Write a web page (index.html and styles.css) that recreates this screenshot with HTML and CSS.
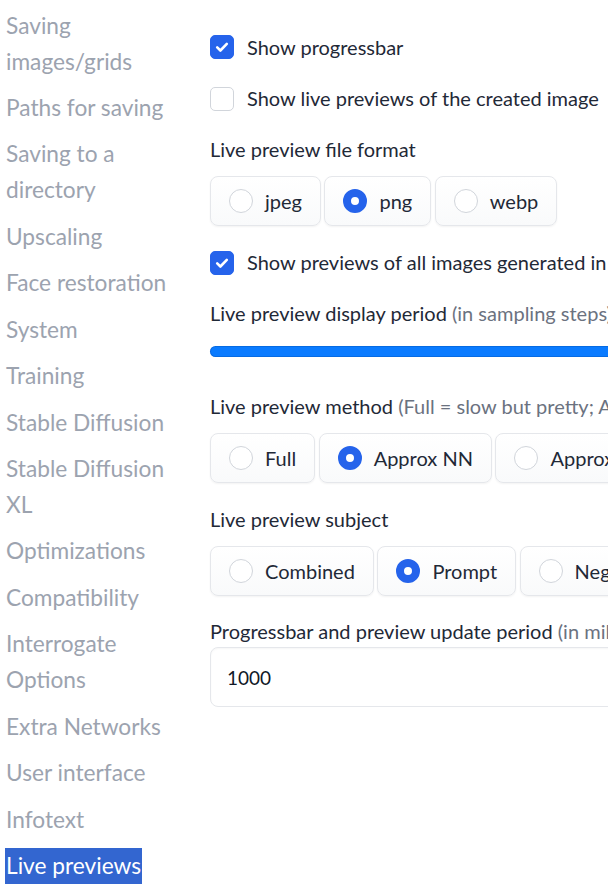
FILE: index.html
```html
<!DOCTYPE html>
<html>
<head>
<meta charset="utf-8">
<link rel="stylesheet" href="styles.css">
</head>
<body>
<div class="page">
  <nav class="sidebar">
    <div class="nav-item">Saving images/grids</div>
    <div class="nav-item">Paths for saving</div>
    <div class="nav-item">Saving to a directory</div>
    <div class="nav-item">Upscaling</div>
    <div class="nav-item">Face restoration</div>
    <div class="nav-item">System</div>
    <div class="nav-item">Training</div>
    <div class="nav-item">Stable Diffusion</div>
    <div class="nav-item">Stable Diffusion XL</div>
    <div class="nav-item">Optimizations</div>
    <div class="nav-item">Compatibility</div>
    <div class="nav-item">Interrogate Options</div>
    <div class="nav-item">Extra Networks</div>
    <div class="nav-item">User interface</div>
    <div class="nav-item">Infotext</div>
    <div class="nav-item"><span class="nav-active">Live previews</span></div>
  </nav>
  <main class="content">
    <label class="check-row">
      <span class="checkbox checked"><svg viewBox="0 0 24 24" width="24" height="24"><path d="M7.2 12.4l3.2 3.1 6.4-6.6" fill="none" stroke="#fff" stroke-width="2.6" stroke-linecap="round" stroke-linejoin="round"/></svg></span>
      <span class="text">Show progressbar</span>
    </label>
    <label class="check-row">
      <span class="checkbox"></span>
      <span class="text">Show live previews of the created image</span>
    </label>
    <div class="group">
      <div class="label">Live preview file format</div>
      <div class="radio-row">
        <div class="radio"><span class="dot"></span><span>jpeg</span></div>
        <div class="radio"><span class="dot on"></span><span>png</span></div>
        <div class="radio"><span class="dot"></span><span>webp</span></div>
      </div>
    </div>
    <label class="check-row">
      <span class="checkbox checked"><svg viewBox="0 0 24 24" width="24" height="24"><path d="M7.2 12.4l3.2 3.1 6.4-6.6" fill="none" stroke="#fff" stroke-width="2.6" stroke-linecap="round" stroke-linejoin="round"/></svg></span>
      <span class="text">Show previews of all images generated in a batch as a grid</span>
    </label>
    <div class="group slider-group">
      <div class="label">Live preview display period <span class="hint">(in sampling steps) - 0 = only show previews on completion</span></div>
      <div class="slider"></div>
    </div>
    <div class="group">
      <div class="label">Live preview method <span class="hint">(Full = slow but pretty; Approx NN and TAESD = fast but low quality; Approx cheap = super fast but terrible otherwise)</span></div>
      <div class="radio-row">
        <div class="radio"><span class="dot"></span><span>Full</span></div>
        <div class="radio"><span class="dot on"></span><span>Approx NN</span></div>
        <div class="radio"><span class="dot"></span><span>Approx cheap</span></div>
        <div class="radio"><span class="dot"></span><span>TAESD</span></div>
      </div>
    </div>
    <div class="group">
      <div class="label">Live preview subject</div>
      <div class="radio-row">
        <div class="radio"><span class="dot"></span><span>Combined</span></div>
        <div class="radio"><span class="dot on"></span><span>Prompt</span></div>
        <div class="radio"><span class="dot"></span><span>Negative prompt</span></div>
      </div>
    </div>
    <div class="group tight">
      <div class="label">Progressbar and preview update period <span class="hint">(in milliseconds)</span></div>
      <div class="input">1000</div>
    </div>
  </main>
</div>
</body>
</html>
```
FILE: styles.css
```css
html, body {
  margin: 0;
  padding: 0;
  overflow: hidden;
  background: #ffffff;
}
body {
  font-family: Lato, "Liberation Sans", sans-serif;
  color: #1f2937;
}
.page {
  display: flex;
  width: 1000px;
  padding-left: 6px;
}
.sidebar {
  width: 180px;
  flex: none;
  padding-top: 7.5px;
  display: flex;
  flex-direction: column;
  gap: 10.45px;
}
.nav-item {
  font-size: 22.7px;
  line-height: 36px;
  color: #9ca3af;
}
.nav-active {
  background: #3366d0;
  color: #ffffff;
  padding: 0 1px;
  margin-left: -1px;
  display: inline-block;
}
.content {
  margin-left: 24px;
  width: 760px;
  flex: none;
  padding-top: 32px;
  display: flex;
  flex-direction: column;
  gap: 21.5px;
  font-size: 20px;
}
.check-row {
  display: flex;
  align-items: center;
  gap: 13px;
  height: 30px;
  white-space: nowrap;
}
.check-row .text {
  position: relative;
  top: -0.5px;
}
.checkbox {
  width: 24px;
  height: 24px;
  box-sizing: border-box;
  border: 1px solid #d1d5db;
  border-radius: 5px;
  background: #ffffff;
  flex: none;
  display: block;
}
.checkbox.checked {
  background: #2563eb;
  border-color: #2563eb;
}
.checkbox svg {
  display: block;
  margin: -1px;
}
.group {
  display: flex;
  flex-direction: column;
  gap: 11px;
}
.group.tight {
  gap: 0;
}
.label {
  line-height: 28px;
  padding-bottom: 2px;
  white-space: nowrap;
}
.hint {
  color: #6b7280;
}
.slider-group {
  gap: 17px;
  margin-bottom: 13.5px;
}
.slider {
  height: 11px;
  border-radius: 6px;
  background: #0a7bff;
  box-shadow: inset 0 0 0 1px rgba(0, 60, 140, 0.25);
}
.radio-row {
  display: flex;
  gap: 3.5px;
}
.radio {
  display: flex;
  align-items: center;
  gap: 12px;
  height: 50px;
  box-sizing: border-box;
  padding: 0 18px;
  border: 1px solid #e5e7eb;
  border-radius: 8px;
  background: linear-gradient(to bottom, #ffffff, #f9fafb);
  box-shadow: 0 1px 2px rgba(0, 0, 0, 0.05);
  white-space: nowrap;
  flex: none;
}
.dot {
  width: 24px;
  height: 24px;
  box-sizing: border-box;
  border: 1px solid #d1d5db;
  border-radius: 50%;
  background: #ffffff;
  flex: none;
}
.dot.on {
  border: 8px solid #2563eb;
}
.input {
  height: 60px;
  box-sizing: border-box;
  border: 1px solid #e5e7eb;
  border-radius: 8px;
  padding-left: 16px;
  display: flex;
  align-items: center;
  font-size: 19px;
  color: #111827;
  box-shadow: inset 0 1px 2px rgba(0, 0, 0, 0.04);
}
```
